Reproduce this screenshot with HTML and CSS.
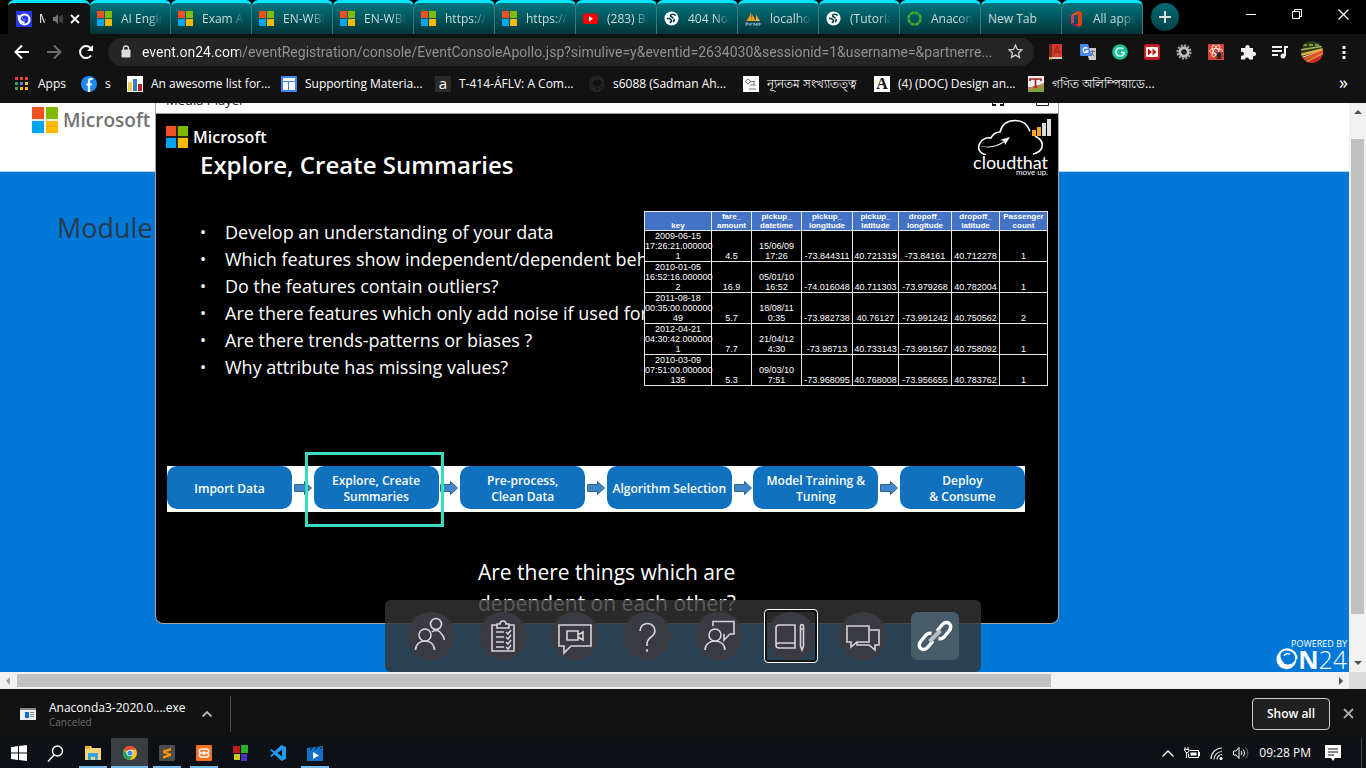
FILE: index.html
```html
<!DOCTYPE html>
<html lang="en">
<head>
<meta charset="utf-8">
<meta name="viewport" content="width=device-width, initial-scale=1">
<title>Module - Media Player</title>
<link rel="stylesheet" href="styles.css">
</head>
<body>
<svg class="defs" aria-hidden="true">
  <defs>
    <symbol id="ms" viewBox="0 0 15 15"><path fill="#f25022" d="M0 0h7v7H0z"/><path fill="#7fba00" d="M8 0h7v7H8z"/><path fill="#00a4ef" d="M0 8h7v7H0z"/><path fill="#ffb900" d="M8 8h7v7H8z"/></symbol>
    <symbol id="globe" viewBox="0 0 16 16"><circle cx="8" cy="8" r="7.5" fill="#fff"/><path d="M12.500 5c-1.500-2-5-2-5.500-.3s2 1.600 2.800 3M3 8c2-.3 3.500.2 4.500 1.400s0 2.600-1.500 3M10 8.500c1.500.5 1 2-.5 3" fill="none" stroke="#0c4248" stroke-width="1.800"/></symbol>
    <symbol id="arrow" viewBox="0 0 18 14"><path d="M.5 3.500h10V.5L17.500 7l-7 6.500v-3H.5z" fill="#3d86c8" stroke="#31618f"/></symbol>
  </defs>
</svg>

<nav class="tabs" aria-label="Tabs">
  <a class="tab active" href="#"><svg width="16" height="16" viewBox="0 0 16 16"><path fill="#2b35e8" d="M0 0h16v16H0z"/><circle cx="8.500" cy="8.500" r="5" fill="none" stroke="#fff" stroke-width="2.200"/><path d="M2.500 4c0 5 2 7.500 6 7.500" fill="none" stroke="#fff" stroke-width="2"/><path d="M6 5.500c0 2.500 1 3.500 3.500 3.500" fill="none" stroke="#8fa0ff"/></svg><span class="name">Module</span>
    <svg class="mute" width="10" height="10" viewBox="0 0 10 10"><path d="M0 3h2l3-3v10L2 7H0z" fill="#777"/><path d="M7 2v6M9 1v8" stroke="#666"/></svg>
    <svg class="close" width="10" height="10" viewBox="0 0 10 10"><path d="M1 1l8 8M9 1L1 9" stroke="#fff" stroke-width="1.800"/></svg></a>
  <a class="tab" href="#"><svg width="15" height="15"><use href="#ms"/></svg><span class="name">AI Engineer</span></a>
  <a class="tab" href="#"><svg width="15" height="15"><use href="#ms"/></svg><span class="name">Exam AI-100</span></a>
  <a class="tab" href="#"><svg width="15" height="15"><use href="#ms"/></svg><span class="name">EN-WBNR</span></a>
  <a class="tab" href="#"><svg width="15" height="15"><use href="#ms"/></svg><span class="name">EN-WBNR</span></a>
  <a class="tab" href="#"><svg width="15" height="15"><use href="#ms"/></svg><span class="name">https://info</span></a>
  <a class="tab" href="#"><svg width="15" height="15"><use href="#ms"/></svg><span class="name">https://info</span></a>
  <a class="tab" href="#"><svg width="15" height="15" viewBox="0 0 15 15"><rect y="2.500" width="15" height="10.500" rx="2.500" fill="#f00"/><path d="M6 5l4 2.700-4 2.700z" fill="#fff"/></svg><span class="name">(283) Bangla</span></a>
  <a class="tab" href="#"><svg width="15" height="15"><use href="#globe"/></svg><span class="name">404 Not F</span></a>
  <a class="tab" href="#"><svg width="16" height="16" viewBox="0 0 16 16"><path d="M6 1c-1 4-3 7-5 9h6zM7 3v7h4z" fill="#f89c0e"/><path d="M11 2c0 3 3 6 4 8h-4z" fill="#f8b04e"/><path d="M1 15v-3h2v2M5 12v3m0-2h2v-1M9 15v-3l2 2 1-2v3M14 15v-3h1v2" fill="none" stroke="#a9b1d4"/></svg><span class="name">localhost</span></a>
  <a class="tab" href="#"><svg width="15" height="15"><use href="#globe"/></svg><span class="name">(Tutorial)</span></a>
  <a class="tab" href="#"><svg width="15" height="15" viewBox="0 0 15 15"><circle cx="7.500" cy="7.500" r="6" fill="none" stroke="#43b02a" stroke-width="2.500" stroke-dasharray="4 .6"/></svg><span class="name">Anaconda</span></a>
  <a class="tab" href="#"><span class="name">New Tab</span></a>
  <a class="tab" href="#"><svg width="15" height="16" viewBox="0 0 15 16"><path d="M2 4l7-4v3L5 4.500v7L2 12.500z" fill="#f0552e"/><path d="M9 0l4 1.500v13L9 16z" fill="#e8400c"/><path d="M2 12.500l7 .5v3z" fill="#c2185b"/><path d="M2 4l3 .5v7l-3 1z" fill="#d8356a"/></svg><span class="name">All apps -</span></a>
  <button class="new-tab" aria-label="New tab"><svg width="12" height="12" viewBox="0 0 12 12"><path d="M6 0v12M0 6h12" stroke="#ddd" stroke-width="2"/></svg></button>
  <div class="win">
    <button aria-label="Minimize"><svg width="11" height="11" viewBox="0 0 11 11"><path d="M0 5.500h10" stroke="#fff"/></svg></button>
    <button aria-label="Restore"><svg width="11" height="11" viewBox="0 0 11 11"><path d="M.5 2.500h7v7h-7zM2.500 2V.5h7v7H8" fill="none" stroke="#fff"/></svg></button>
    <button aria-label="Close"><svg width="11" height="11" viewBox="0 0 11 11"><path d="M.5.5l10 10M10.500.5l-10 10" stroke="#fff" stroke-width="1.200"/></svg></button>
  </div>
</nav>

<div class="toolbar">
  <button class="tool" aria-label="Back"><svg width="16" height="16" viewBox="0 0 16 16"><path d="M15 8H2M8 1.500L1.500 8 8 14.500" fill="none" stroke="#fff" stroke-width="2"/></svg></button>
  <button class="tool" aria-label="Forward"><svg width="16" height="16" viewBox="0 0 16 16"><path d="M1 8h13M8 1.500L14.500 8 8 14.500" fill="none" stroke="#6c6c6c" stroke-width="2"/></svg></button>
  <button class="tool" aria-label="Reload"><svg width="16" height="16" viewBox="0 0 16 16"><path d="M13 11.500A6 6 0 1 1 12.500 4" fill="none" stroke="#fff" stroke-width="2"/><path d="M15 1v6H9z" fill="#fff"/></svg></button>
  <div class="omni">
    <svg width="10" height="13" viewBox="0 0 10 13"><path d="M1 5h8v7H1z" fill="#ddd" stroke="#ddd" stroke-linejoin="round"/><path d="M2.500 5V3.500a2.500 2.500 0 0 1 5 0V5" fill="none" stroke="#ddd" stroke-width="1.300"/></svg>
    <input type="text" aria-label="Address" value="event.on24.com/eventRegistration/console/EventConsoleApollo.jsp?simulive=y&amp;eventid=2634030&amp;sessionid=1&amp;username=&amp;partnerre...">
    <svg width="15" height="15" viewBox="0 0 15 15"><path d="M7.500 1.200l1.900 4.200 4.500.5-3.400 3 1 4.500-4-2.300-4 2.300 1-4.500-3.400-3 4.500-.5z" fill="none" stroke="#d0d0d0" stroke-width="1.300"/></svg>
  </div>
  <button class="ext" aria-label="Dictionary"><svg width="16" height="16" viewBox="0 0 16 16"><path d="M1 0h13v14H1z" fill="#d5392b"/><path d="M1 0h3v14H1z" fill="#7b2a22"/><path d="M1 13h13v2H1z" fill="#ccc"/><path d="M6 10l3-8 3 8M7 7.500h4" fill="none" stroke="#a5281e" stroke-width="1.300"/><path d="M1 13h3v3l-1.500-1L1 16z" fill="#e6b422"/></svg></button>
  <button class="ext" aria-label="Translate"><svg width="16" height="16" viewBox="0 0 16 16"><path d="M6 4h10v12H9z" fill="#c9ccd1"/><path d="M0 0h8l4 12H1a1 1 0 0 1-1-1z" fill="#4a86ee"/><path d="M7.500 4.500A2.500 2.500 0 1 0 8 7H5.500" fill="none" stroke="#fff" stroke-width="1.300"/><path d="M10.500 7.500h4.500M12.700 6v1.500c0 2-1 3.500-2 4.500M11.500 9l3 3.500" fill="none" stroke="#687076"/></svg></button>
  <button class="ext" aria-label="Grammar"><svg width="16" height="16" viewBox="0 0 16 16"><circle cx="8" cy="8" r="7.800" fill="#15c39a"/><path d="M11 5A4.200 4.200 0 1 0 12 9.500L12 8.500H9" fill="none" stroke="#fff" stroke-width="1.600"/></svg></button>
  <button class="ext" aria-label="Skip"><svg width="16" height="16" viewBox="0 0 16 16"><rect width="16" height="16" rx="2.500" fill="#c01f1f"/><rect x="2" y="3" width="12" height="10" rx="1" fill="#fff"/><path d="M4 4.500L8 8l-4 3.500zM8.500 4.500l4 3.500-4 3.500z" fill="#b01818"/></svg></button>
  <button class="ext" aria-label="Settings"><svg width="16" height="16" viewBox="0 0 16 16"><circle cx="8" cy="8" r="6.600" fill="none" stroke="#a9a9a9" stroke-width="2" stroke-dasharray="2 1.450"/><circle cx="8" cy="8" r="4.200" fill="none" stroke="#bdbdbd" stroke-width="3"/></svg></button>
  <button class="ext" aria-label="React tools"><svg width="16" height="16" viewBox="0 0 16 16"><path fill="#d94436" d="M0 0h16v16H0z"/><g fill="none" stroke="#fff" stroke-width=".8"><ellipse cx="8" cy="7" rx="6.500" ry="2.500"/><ellipse cx="8" cy="7" rx="6.500" ry="2.500" transform="rotate(60 8 7)"/><ellipse cx="8" cy="7" rx="6.500" ry="2.500" transform="rotate(120 8 7)"/></g><path d="M8 9h7M8 12h7M8 15l2-2M14 15l-2-2" stroke="#333"/><ellipse cx="11" cy="11.500" rx="2.200" ry="3.500" fill="#30201e"/></svg></button>
  <button class="ext" aria-label="Extensions"><svg width="16" height="16" viewBox="0 0 16 16"><path d="M1 4h4.500a2.200 2.200 0 1 1 4 0H13v4a2.200 2.200 0 1 1 0 4v3.500H9a2 2 0 1 0-4 0H1v-4a2 2 0 1 0 0-3.500z" fill="#f4f4f4"/></svg></button>
  <button class="ext" aria-label="Media"><svg width="16" height="16" viewBox="0 0 16 16"><path d="M0 3h10M0 7h10M0 11h6" stroke="#eee" stroke-width="1.800"/><path d="M13 12V3h3" fill="none" stroke="#eee" stroke-width="2"/><circle cx="11" cy="12" r="2.500" fill="#eee"/></svg></button>
  <button class="ext" aria-label="Profile"><svg width="22" height="22" viewBox="0 0 22 22"><clipPath id="av"><circle cx="11" cy="11" r="11"/></clipPath><g clip-path="url(#av)"><path fill="#2c3c1e" d="M0 0h22v22H0z"/><path d="M2 4h18" stroke="#7d9a34" stroke-width="2" stroke-dasharray="4 2"/><path d="M-1 9L23 5" stroke="#a9b35a" stroke-width="1.500"/><path d="M-1 14L23 8" stroke="#e9b23b" stroke-width="2.500"/><path d="M-1 17L23 9" stroke="#f3e8c0" stroke-width="1"/><path d="M-1 20L23 10" stroke="#e8502b" stroke-width="3"/><path d="M3 22L23 12" stroke="#f08a3c" stroke-width="2"/><path d="M5 24L23 15" stroke="#d3242b" stroke-width="3.500"/></g></svg></button>
  <button class="ext" aria-label="Menu"><svg width="4" height="14" viewBox="0 0 4 14"><path d="M.5 1h3v3h-3zM.5 6h3v3h-3zM.5 11h3v3h-3z" fill="#eee"/></svg></button>
</div>

<nav class="marks" aria-label="Bookmarks">
  <a class="mark apps" href="#"><svg width="14" height="14" viewBox="0 0 14 14"><path fill="#ea4335" d="M0 0h3v3H0zM5 0h3v3H5zM10 0h3v3h-3z"/><path fill="#34a853" d="M0 5h3v3H0zM0 10h3v3H0z"/><path fill="#4285f4" d="M5 5h3v3H5z"/><path fill="#fbbc04" d="M10 5h3v3h-3zM5 10h3v3H5zM10 10h3v3h-3z"/></svg>Apps</a>
  <a class="mark tiny" href="#"><svg width="16" height="16" viewBox="0 0 16 16"><circle cx="8" cy="8" r="8" fill="#1b8bf2"/><path d="M11.500 3H10C8.700 3 8 3.800 8 5v11M5.500 8.500h5.200" fill="none" stroke="#fff" stroke-width="2.200"/></svg>s</a>
  <a class="mark" href="#"><svg width="16" height="16" viewBox="0 0 16 16"><path fill="#fff" d="M0 0h16v16H0z"/><path fill="#f0c94e" d="M1 6h4v9H1z"/><path fill="#2e83b8" d="M6 3h4v12H6z"/><path fill="#b32025" d="M11 8h4v7h-4z"/></svg>An awesome list for...</a>
  <a class="mark" href="#"><svg width="16" height="16" viewBox="0 0 16 16"><rect width="16" height="16" rx="1" fill="#4285f4"/><path fill="#fff" d="M2 2h12v3H2zM2 6h5v8H2zM8 6h6v8H8z"/></svg>Supporting Materia...</a>
  <a class="mark" href="#"><span class="fav grey">a</span>T-414-ÁFLV: A Com...</a>
  <a class="mark" href="#"><svg width="16" height="16" viewBox="0 0 16 16"><path d="M6 15.500v-3c-2 .5-2.800-.5-3-1.500M10 15.500v-3c0-.8-.2-1.300-.6-1.600 2.600-.3 3.800-1.400 3.800-4 0-1.100-.4-1.900-1-2.600.2-.7.200-1.400-.1-2.100-1 0-1.700.5-2.300.9a8 8 0 0 0-3.600 0C5.600 2.700 4.900 2.200 3.900 2.200c-.3.700-.3 1.400-.1 2.100C3.200 5 2.800 5.800 2.800 6.900c0 2.600 1.200 3.700 3.800 4" fill="none" stroke="#24292e" stroke-width="1.500"/><circle cx="8" cy="8" r="7.200" fill="none" stroke="#24292e" stroke-width="1.500"/></svg>s6088 (Sadman Ah...</a>
  <a class="mark short" href="#"><svg width="16" height="16" viewBox="0 0 16 16"><path fill="#fff" d="M0 0h16v16H0z"/><path d="M5 3l3 2.500L5 8 2 5.500zM8 5.500h4M11 5v4M7 9h5v1M6 13h7" fill="none" stroke="#777"/></svg>ন্যূনতম সংখ্যাতত্ত্ব</a>
  <a class="mark" href="#"><span class="fav serif">A</span>(4) (DOC) Design an...</a>
  <a class="mark" href="#"><svg width="16" height="16" viewBox="0 0 16 16"><path fill="#eee" d="M0 0h16v16H0z"/><path d="M0 13c5 0 10-3 16-5v8H0z" fill="#7fa33c"/><path d="M0 11c5 0 10-2 16-4v3c-6 2-10 4-16 4z" fill="#b98a52"/><path d="M2 5V3h11v2M7.500 3v8M5.500 11h4" fill="none" stroke="#a5201f" stroke-width="1.700"/></svg>গণিত অলিম্পিয়াডে...</a>
  <button class="more" aria-label="More bookmarks">»</button>
</nav>

<main class="view">
  <div class="page">
    <header class="brand"><svg width="26" height="26"><use href="#ms"/></svg><span>Microsoft</span></header>
    <section class="stage"><h1>Module</h1></section>

    <article class="player">
      <header class="player-bar"><span>Media Player</span>
        <svg width="12" height="12" viewBox="0 0 12 12"><path d="M0 8v3h4M12 8v3H8M0 4V1h4M12 4V1H8" fill="none" stroke="#111" stroke-width="2"/></svg>
        <svg width="13" height="12" viewBox="0 0 13 12"><path d="M.5.500h12v11H.500z" fill="none" stroke="#222"/></svg></header>
      <div class="slide">
        <div class="slide-top">
          <div>
            <div class="ms-row"><svg width="22" height="22"><use href="#ms"/></svg>Microsoft</div>
            <h2>Explore, Create Summaries</h2>
          </div>
          <div class="cloud">
            <svg width="78" height="36" viewBox="0 0 78 36"><path d="M13 36C6 34 4 29 7 24c2-4 7-6 11-5 2-4 5-6 9-6C29 5 35 1.500 42 1.500c8 0 13 4.500 15 11" fill="none" stroke="#fff" stroke-width="1.600"/><path d="M62 17c6 3 8 7 7 11-1 4-4 6-9 7" fill="none" stroke="#fff" stroke-width="1.600"/><path d="M7 27c9 2 18-.5 24-5l-4-1 10-3-5 8-.6-3C25 28 15 30 7 27z" fill="#fff"/><path d="M59 11h4v6h-4zM64 8h4v9h-4z" fill="#f9a72b"/><path d="M69 4h4v13h-4zM74 0h4v17h-4z" fill="#ddd"/></svg>
            <strong>cloudthat</strong><small>move up.</small>
          </div>
        </div>
        <div class="slide-mid">
          <ul>
            <li>Develop an understanding of your data</li>
            <li>Which features show independent/dependent beha</li>
            <li>Do the features contain outliers?</li>
            <li>Are there features which only add noise if used for</li>
            <li>Are there trends-patterns or biases ?</li>
            <li>Why attribute has missing values?</li>
          </ul>
          <table>
            <colgroup><col class="c67"><col class="c40"><col class="c50"><col class="c51"><col class="c46"><col class="c53"><col class="c48"><col class="c48"></colgroup>
            <thead><tr><th>key</th><th>fare_<br>amount</th><th>pickup_<br>datetime</th><th>pickup_<br>longitude</th><th>pickup_<br>latitude</th><th>dropoff_<br>longitude</th><th>dropoff_<br>latitude</th><th>Passenger<br>count</th></tr></thead>
            <tbody>
              <tr><td>2009-06-15<br>17:26:21.000000<br>1</td><td>4.5</td><td>15/06/09<br>17:26</td><td>-73.844311</td><td>40.721319</td><td>-73.84161</td><td>40.712278</td><td>1</td></tr>
              <tr><td>2010-01-05<br>16:52:16.000000<br>2</td><td>16.9</td><td>05/01/10<br>16:52</td><td>-74.016048</td><td>40.711303</td><td>-73.979268</td><td>40.782004</td><td>1</td></tr>
              <tr><td>2011-08-18<br>00:35:00.000000<br>49</td><td>5.7</td><td>18/08/11<br>0:35</td><td>-73.982738</td><td>40.76127</td><td>-73.991242</td><td>40.750562</td><td>2</td></tr>
              <tr><td>2012-04-21<br>04:30:42.000000<br>1</td><td>7.7</td><td>21/04/12<br>4:30</td><td>-73.98713</td><td>40.733143</td><td>-73.991567</td><td>40.758092</td><td>1</td></tr>
              <tr><td>2010-03-09<br>07:51:00.000000<br>135</td><td>5.3</td><td>09/03/10<br>7:51</td><td>-73.968095</td><td>40.768008</td><td>-73.956655</td><td>40.783762</td><td>1</td></tr>
            </tbody>
          </table>
        </div>
        <div class="flow">
          <div class="step">Import Data</div><svg width="18" height="14"><use href="#arrow"/></svg>
          <div class="step current">Explore, Create<br>Summaries</div><svg width="18" height="14"><use href="#arrow"/></svg>
          <div class="step">Pre-process,<br>Clean Data</div><svg width="18" height="14"><use href="#arrow"/></svg>
          <div class="step">Algorithm Selection</div><svg width="18" height="14"><use href="#arrow"/></svg>
          <div class="step">Model Training &amp;<br>Tuning</div><svg width="18" height="14"><use href="#arrow"/></svg>
          <div class="step">Deploy<br>&amp; Consume</div>
        </div>
        <p class="caption">Are there things which are<br>dependent on each other?</p>
      </div>
    </article>

    <a class="powered" href="#"><small>POWERED BY</small>
      <span><svg width="22" height="22" viewBox="0 0 22 22"><path d="M2.500 5A10 10 0 1 0 19.500 7C20 13 17 16.500 12 16.500 7 16.500 3 12 2.500 5z" fill="#fff"/><path d="M4.500 4A9.500 9.500 0 0 1 20.500 11M4.500 4C2.500 7 3 12 7 15.500" fill="none" stroke="#fff" stroke-width="2.200"/><path d="M8 8c1-2.500 4-3 6-1.500" fill="none" stroke="#fff" stroke-width="1.300"/></svg><b>N</b>24</span></a>
  </div>

  <div class="vscroll"><i class="up"></i><i class="thumb"></i><i class="down"></i></div>
  <div class="hscroll"><i class="left"></i><i class="thumb"></i><i class="right"></i></div>
  <div class="corner"></div>

  <div class="dock">
    <button aria-label="Speakers"><svg viewBox="0 0 48 48"><circle cx="29" cy="12" r="5.500"/><path d="M25 20c2-2 6-2 8 0s4 4 4.500 8"/><circle cx="18" cy="23" r="6"/><path d="M8.500 38c0-12 19-12 19 0"/></svg></button>
    <button aria-label="Survey"><svg viewBox="0 0 48 48"><path d="M18 13h-5v26h22V13h-5M18 16v-4h3c0-4 6-4 6 0h3v4z"/><path d="M17 20h8M17 25h8M17 30h8M17 35h8M27 20l2 2 3-4M27 25l2 2 3-4M27 30l2 2 3-4M27 35l2 2 3-4"/></svg></button>
    <button aria-label="Video chat"><svg viewBox="0 0 48 48"><path d="M8 13h32v21H20l-7 7v-7H8z"/><path d="M16 19h11v9H16zM27 23l5-3v8l-5-3"/></svg></button>
    <button aria-label="Help"><svg viewBox="0 0 48 48"><path d="M17 19c0-10 15-10 15 0 0 6-8 6-8 13v2M24 37v3"/></svg></button>
    <button aria-label="Presenter"><svg viewBox="0 0 48 48"><circle cx="20" cy="23" r="6"/><path d="M10 38c0-12 20-12 20 0M18 14V9.500h21V22h-4l-6 6v-6"/></svg></button>
    <button class="focused" aria-label="Resources"><svg viewBox="0 0 48 48"><path d="M28 31H12c-4 0-4 5 0 5h16V13H12c-2 0-3 1-3 3v17M33.500 14c0-2 3-2 3 0v20L35 38l-1.500-4zM33.500 17h3"/></svg></button>
    <button aria-label="Chat"><svg viewBox="0 0 48 48"><path d="M8 14h22v16H18l-6 5v-5H8z"/><path d="M30 18h10v15h-4v5l-6-5H18v-3"/></svg></button>
    <button class="link" aria-label="Link"><svg viewBox="0 0 48 48"><g fill="none" stroke="#fff" stroke-width="3.500"><path d="M26 19l5-6c5-6 12 0 7 6l-5 6c-2 2-3.500 2-5.500 1.500M22 29l-5 6c-5 6-12 0-7-6l5-6c2-2 3.500-2 5.500-1.500"/></g><path d="M18.500 29.500L29.500 18.500" stroke="#b9bfc4" stroke-width="4"/></svg></button>
  </div>
</main>

<footer class="downloads">
  <svg width="16" height="12" viewBox="0 0 16 12"><path fill="#eee" d="M0 0h16v12H0z"/><path fill="#888" d="M0 0h16v2H0z"/><path fill="#0b6fd0" d="M5 4h4v6H5z"/><path d="M10 4.500h4M10 6.500h4M10 8.500h4" stroke="#888"/></svg>
  <div class="file"><b>Anaconda3-2020.0....exe</b><small>Canceled</small></div>
  <button class="caret" aria-label="Options"><svg width="10" height="6" viewBox="0 0 10 6"><path d="M.5 5.500L5 1l4.500 4.500" fill="none" stroke="#bbb" stroke-width="1.800"/></svg></button>
  <span class="rule"></span>
  <button class="show">Show all</button>
  <button class="dismiss" aria-label="Close"><svg width="11" height="11" viewBox="0 0 11 11"><path d="M1 1l9 9M10 1l-9 9" stroke="#aaa" stroke-width="1.800"/></svg></button>
</footer>

<footer class="taskbar">
  <button aria-label="Start"><svg width="16" height="16" viewBox="0 0 16 16"><path d="M0 2.200L7 1v6.500H0zM8 .9L16 0v7.500H8zM0 8.500h7V15l-7-1zM8 8.500h8V16l-8-1z" fill="#fff"/></svg></button>
  <button aria-label="Search"><svg width="17" height="17" viewBox="0 0 17 17"><circle cx="10.500" cy="6" r="5" fill="none" stroke="#fff" stroke-width="1.400"/><path d="M7 10l-6 6.500" stroke="#fff" stroke-width="1.500"/></svg></button>
  <button class="run" aria-label="Explorer"><svg width="16" height="14" viewBox="0 0 16 14"><path d="M0 0h6l1 2h9v12H0z" fill="#f8d775"/><path d="M0 0h5v3H0z" fill="#f0b429"/><path d="M3 14V7h10v7h-3v-3H6v3z" fill="#3aa5e8"/></svg></button>
  <button class="run on" aria-label="Chrome"><svg width="14" height="14" viewBox="0 0 14 14"><circle cx="7" cy="7" r="7" fill="#fbc116"/><path d="M7 7L.9 3.500A7 7 0 0 1 13.100 3.500H7z" fill="#dd4b3e"/><path d="M.9 3.500A7 7 0 0 0 7 14l3-5.500H4z" fill="#1da362"/><circle cx="7" cy="7" r="3.300" fill="#fff"/><circle cx="7" cy="7" r="2.600" fill="#4285f4"/></svg></button>
  <button class="run" aria-label="Sublime"><svg width="16" height="16" viewBox="0 0 16 16"><rect width="16" height="16" rx="1" fill="#4b4b4b"/><path d="M12 3v2.500L7 7l5 1.500V11l-8 2.500V11l5-1.500L4 8V5.500z" fill="#ff9800"/></svg></button>
  <button class="run" aria-label="XAMPP"><svg width="16" height="16" viewBox="0 0 16 16"><rect width="16" height="16" rx="1" fill="#f5731f"/><path d="M5 4h6a2 2 0 0 1 1 3.500L11 8l1 .5A2 2 0 0 1 11 12H5a2 2 0 0 1-1-3.500L5 8l-1-.5A2 2 0 0 1 5 4zM6.500 6.500l3 3M9.500 6.500l-3 3" fill="none" stroke="#fff" stroke-width="1.600"/></svg></button>
  <button aria-label="Blocks"><svg width="15" height="16" viewBox="0 0 15 16"><path fill="#c21a1a" d="M0 1h7v7H0z"/><path fill="#25b52a" d="M8 0h7v8H8z"/><path fill="#c6cc18" d="M1 9h6v6H1z"/><path fill="#4b30c8" d="M8 9h6v7H8z"/></svg></button>
  <button aria-label="Code"><svg width="16" height="16" viewBox="0 0 16 16"><path d="M11.500 0L16 2v12l-4.500 2-7-6.500L1.500 12 0 11l3.500-3L0 5l1.500-1 3 2.500zM12 4.500L7.500 8l4.500 3.500z" fill="#1f9cf0"/></svg></button>
  <button class="run" aria-label="Movies"><svg width="16" height="15" viewBox="0 0 16 15"><path d="M0 2l16-2v5H0z" fill="#0f7fc4"/><path d="M3 4l3-3M8 3.500l3-3M13 3l2-2" stroke="#0a2e66" stroke-width="1.500"/><path d="M0 4h16v11H0z" fill="#1670c8"/><path d="M6 6l6 3.500L6 13z" fill="#fff"/></svg></button>
  <div class="tray">
    <svg width="12" height="7" viewBox="0 0 12 7"><path d="M.5 6.500L6 1l5.500 5.500" fill="none" stroke="#fff" stroke-width="1.300"/></svg>
    <svg width="16" height="12" viewBox="0 0 16 12"><path d="M1 0v3M4 0v3M0 2.500h5v2L2.500 6zM2.500 5v6" fill="none" stroke="#fff"/><path d="M6 3.500h8.500v7H4.500v-4M15.500 5v4" fill="none" stroke="#fff"/><path d="M6.500 5.500h6v3h-6z" fill="#fff"/></svg>
    <svg width="13" height="13" viewBox="0 0 13 13"><path d="M1 12A11 11 0 0 1 12 1M4 12.500A8 8 0 0 1 12 4.500M7 12.500a5 5 0 0 1 5-5" fill="none" stroke="#ddd" stroke-width="1.200"/><circle cx="11" cy="11.500" r="1.500" fill="#fff"/></svg>
    <svg width="16" height="14" viewBox="0 0 16 14"><path d="M.5 5h2.500l3-3.500v11L3 9H.5z" fill="none" stroke="#fff"/><path d="M8 5c1 1 1 3 0 4M10 3.500c2 2 2 5 0 7" fill="none" stroke="#fff"/><path d="M12.500 1.500c3 3 3 8 0 11" fill="none" stroke="#777"/></svg>
    <time>09:28 PM</time>
    <svg class="note" width="16" height="16" viewBox="0 0 16 16"><path d="M0 0h16v13h-6l-2 3-2-3H0z" fill="#fff"/><path d="M3 4h10M3 7h10M3 10h6" stroke="#111"/></svg>
  </div>
</footer>
</body>
</html>
```
FILE: styles.css
```css
* { box-sizing: border-box; }
body {
  margin: 0;
  height: 100vh;
  display: flex;
  flex-direction: column;
  overflow: hidden;
  background: #121212;
  color: #fff;
  font: 12px/16px "Open Sans", "Noto Sans", sans-serif;
}
svg { flex: none; display: block; }
button { margin: 0; padding: 0; border: 0; background: none; color: inherit; font: inherit; display: flex; align-items: center; justify-content: center; }
a { color: inherit; text-decoration: none; }
.defs { position: absolute; width: 0; height: 0; }

/* tab strip */
.tabs { flex: none; height: 34px; display: flex; background: #000; padding-left: 8px; }
.tab {
  flex: 0 1 81px;
  min-width: 0;
  display: flex;
  align-items: center;
  gap: 9px;
  padding: 0 7px;
  border-top: 3px solid #00e5ff;
  border-right: 1px solid #41767b;
  border-radius: 6px 6px 0 0;
  background: linear-gradient(#01757e, #01353a);
  color: #c8dcde;
}
.tab .name { flex: 1; min-width: 0; overflow: hidden; white-space: nowrap; -webkit-mask-image: linear-gradient(90deg, #000 65%, transparent); mask-image: linear-gradient(90deg, #000 65%, transparent); }
.tab:not(:has(svg)) .name { -webkit-mask-image: none; mask-image: none; }
.tab.active { flex-basis: 82px; background: #121212; border-right: 0; gap: 7px; color: #fff; padding-left: 8px; }
.tab.active .name { flex: 0 0 7px; }
.new-tab { flex: none; width: 28px; height: 28px; margin: 3px 0 0 8px; border-radius: 50%; background: linear-gradient(#016a72, #01424a); }
.win { margin-left: auto; display: flex; height: 28px; }
.win button { width: 46px; }

/* toolbar */
.toolbar { flex: none; height: 35px; display: flex; align-items: center; padding: 0 6px; }
.tool { flex: none; width: 32px; height: 28px; }
.omni { flex: 1; min-width: 0; height: 28px; margin: 0 6px; border-radius: 14px; background: #252525; display: flex; align-items: center; gap: 11px; padding: 0 11px 0 13px; }
.omni input {
  flex: 1;
  min-width: 0;
  border: 0;
  padding: 0;
  font: 14px/20px Roboto, sans-serif;
  color: transparent;
  background: linear-gradient(90deg, #fff 97px, #949494 97px);
  -webkit-background-clip: text;
  background-clip: text;
}
.ext { flex: none; width: 32px; height: 28px; }

/* bookmarks */
.marks { flex: none; height: 34px; display: flex; align-items: center; padding: 0 18px 4px 15px; }
.mark { flex: 0 1 154px; min-width: 0; display: flex; align-items: center; gap: 8px; white-space: nowrap; }
.mark.apps { flex-basis: 66px; gap: 9px; }
.mark.tiny { flex-basis: 46px; }
.mark.short { flex-basis: 131px; }
.fav { flex: none; width: 16px; height: 16px; text-align: center; line-height: 14px; font-size: 15px; }
.fav.grey { background: #2b2b2b; }
.fav.serif { background: #fff; color: #111; font: bold 16px/16px "Liberation Serif", serif; }
.more { margin-left: auto; font-size: 18px; line-height: 12px; padding-bottom: 4px; }

/* web page */
.view { flex: 1; min-height: 0; position: relative; display: grid; grid-template: minmax(0, 1fr) 17px / minmax(0, 1fr) 17px; }
.page { position: relative; overflow: hidden; display: flex; flex-direction: column; background: #0078d7; font-family: "Open Sans", sans-serif; }
.brand { flex: none; height: 69px; padding: 4px 0 0 32px; display: flex; align-items: flex-start; gap: 5px; background: #fff; border-bottom: 1px solid #b5d6f2; color: #737373; font: 600 19px/26px "Open Sans", sans-serif; }
.stage { flex: 1; padding: 36px 57px; }
.stage h1 { margin: 0; font-size: 27px; line-height: 40px; font-weight: 400; color: #2b3a4a; }

.player { position: absolute; top: 0; left: 155px; right: 290px; bottom: 48px; display: flex; flex-direction: column; border: 1px solid #a5a5a5; border-top: 0; border-radius: 0 0 8px 8px; background: #000; overflow: hidden; }
.player-bar { flex: none; height: 11px; display: flex; align-items: flex-end; gap: 32px; padding: 0 9px 7px 10px; overflow: hidden; background: #fff; border-bottom: 1px solid #999; color: #222; font-size: 13px; line-height: 12px; }
.player-bar span { flex: 1; }
.slide { flex: 1; padding: 5px 7px 0 10px; display: flex; flex-direction: column; }
.slide-top { display: flex; justify-content: space-between; height: 91px; }
.ms-row { display: flex; align-items: center; gap: 5px; padding-top: 5px; font: 600 16px/26px "Open Sans", sans-serif; }
.slide h2 { margin: 0 0 0 34px; font-size: 24px; line-height: 30px; font-weight: 600; }
.cloud { display: flex; flex-direction: column; align-items: flex-end; font-family: Lato, sans-serif; }
.cloud strong { font-weight: 400; font-size: 18px; line-height: 14px; margin-right: 3px; }
.cloud small { font-size: 8px; line-height: 6px; margin-right: 3px; }
.slide-mid { display: flex; height: 243px; padding-right: 3px; }
.slide ul { flex: 1; min-width: 0; overflow: hidden; white-space: nowrap; list-style: none; margin: 0; padding: 9px 0 0 34px; font-size: 18px; line-height: 27px; }
.slide li { display: flex; }
.slide li::before { content: "•"; flex: none; width: 25px; font-size: 16px; }
.slide table { flex: none; align-self: flex-start; margin-top: 1px; width: 403px; border-collapse: collapse; table-layout: fixed; font: 9px/10px "Liberation Sans", sans-serif; text-align: center; }
th, td { border: 1px solid #e8e8e8; padding: 0; vertical-align: bottom; white-space: nowrap; }
th { background: #4472c4; font-size: 8px; line-height: 9px; }
.c67 { width: 67px; } .c40 { width: 40px; } .c50 { width: 50px; } .c51 { width: 51px; } .c46 { width: 46px; } .c53 { width: 53px; } .c48 { width: 48px; }
.flow { margin: 13px 26px 0 1px; display: flex; align-items: center; justify-content: space-between; background: #fff; padding-bottom: 3px; height: 46px; }
.step { position: relative; width: 125px; height: 43px; padding-top: 3px; border-radius: 10px; background: #1072be; display: flex; align-items: center; justify-content: center; text-align: center; font: 600 12px/16px "Open Sans", sans-serif; white-space: nowrap; }
.step.current::after { content: ""; position: absolute; inset: -14px -5px -18px -9px; border: 3px solid #35dcc0; z-index: 1; }
.caption { margin: 45px 0 0 312px; font-size: 21px; line-height: 31px; }

.powered { position: absolute; right: 2px; bottom: 2px; display: flex; flex-direction: column; align-items: flex-end; }
.powered small { font-size: 9px; line-height: 9px; }
.powered span { display: flex; align-items: center; font-size: 25px; line-height: 22px; font-weight: 300; }
.powered b { font-weight: 700; }

/* scrollbars */
.vscroll, .hscroll { background: #f1f1f1; display: flex; align-items: center; }
.vscroll { flex-direction: column; padding: 7px 0; }
.hscroll { padding: 0 6px; }
.corner { background: #dcdcdc; }
.vscroll i, .hscroll i { flex: none; border: 4px solid transparent; }
.vscroll .thumb { width: 13px; flex: 1; margin: 25px 0 47px; border: 0; background: #c1c1c1; }
.hscroll .thumb { height: 13px; flex: 1; margin: 0 288px 0 7px; border: 0; background: #c1c1c1; }
.vscroll .up { border-bottom-color: #505050; border-top: 0; }
.vscroll .down { border-top-color: #505050; border-bottom: 0; }
.hscroll .left { border-right-color: #a3a3a3; border-left: 0; }
.hscroll .right { border-left-color: #505050; border-right: 0; }

/* console dock */
.dock { position: absolute; left: 0; right: 0; bottom: 17px; margin: auto; width: 596px; height: 72px; border-radius: 6px; background: rgba(52, 52, 52, .81); display: flex; align-items: center; justify-content: center; gap: 24px; z-index: 2; }
.dock button { position: relative; width: 48px; height: 48px; border-radius: 50%; background: #3a3a42; }
.dock svg { width: 48px; height: 48px; fill: none; stroke: #d5d5d8; stroke-width: 1.6; }
.dock .focused::after { content: ""; position: absolute; inset: -3px; border: 1px solid #fff; border-radius: 4px; box-shadow: inset 0 0 0 2px #111; }
.dock .link { border-radius: 6px; background: #475c68; }

/* download shelf */
.downloads { flex: none; height: 49px; display: flex; align-items: center; padding: 0 12px 0 20px; }
.file { margin-left: 13px; min-width: 140px; display: flex; flex-direction: column; padding-top: 2px; }
.file b { font-weight: 400; line-height: 16px; }
.file small { font-size: 10px; line-height: 13px; color: #6d6d6d; }
.caret { width: 36px; height: 32px; }
.rule { width: 1px; height: 36px; margin-left: 5px; background: #4a4a4a; }
.show { margin-left: auto; width: 78px; height: 32px; border: 1px solid #ccc; border-radius: 4px; background: #202020; font-weight: 600; }
.dismiss { margin-left: 13px; }

/* taskbar */
.taskbar { flex: none; height: 30px; display: flex; background: #0d1116; }
.taskbar button { width: 37px; border: solid transparent; border-width: 2px 0; }
.taskbar .run { background: linear-gradient(#76b9ed, #76b9ed) center bottom / 28px 2px no-repeat border-box; }
.taskbar .on { background: #3a3d41; border-bottom-color: #76b9ed; }
.tray { margin-left: auto; display: flex; align-items: center; gap: 10px; padding-right: 4px; }
.tray time { margin: 0 4px 0 0; }
.tray .note { margin-right: 10px; }
.tray::after { content: ""; width: 1px; height: 30px; background: #444; }
```
